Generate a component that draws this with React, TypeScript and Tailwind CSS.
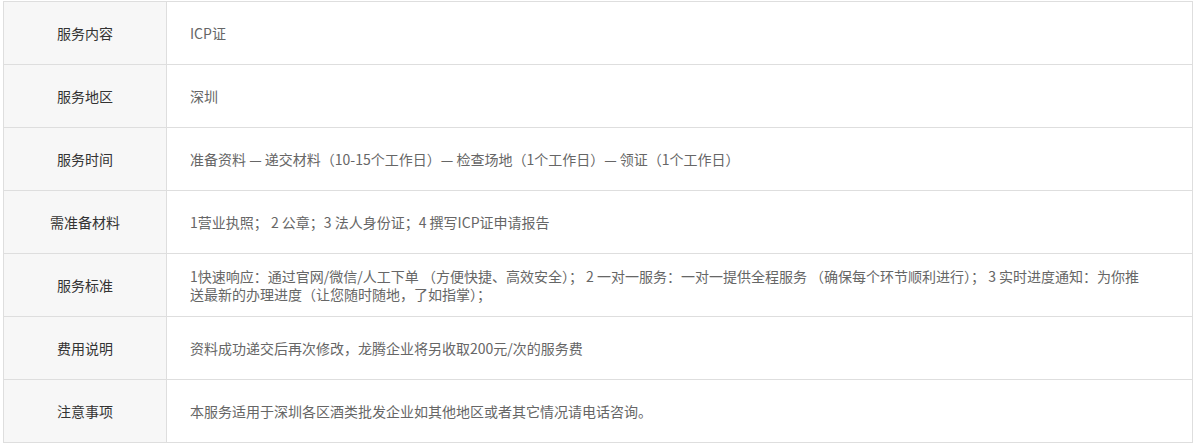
import React from "react";

const rows: { label: string; content: React.ReactNode }[] = [
  { label: "服务内容", content: "ICP证" },
  { label: "服务地区", content: "深圳" },
  {
    label: "服务时间",
    content: "准备资料 — 递交材料（10-15个工作日）— 检查场地（1个工作日）— 领证（1个工作日）",
  },
  { label: "需准备材料", content: "1营业执照； 2 公章；3 法人身份证；4 撰写ICP证申请报告" },
  {
    label: "服务标准",
    content: (
      <>
        1快速响应：通过官网/微信/人工下单 （方便快捷、高效安全）； 2 一对一服务：一对一提供全程服务 （确保每个环节顺利进行）； 3 实时进度通知：为你推
        <br />
        送最新的办理进度（让您随时随地，了如指掌）；
      </>
    ),
  },
  { label: "费用说明", content: "资料成功递交后再次修改，龙腾企业将另收取200元/次的服务费" },
  { label: "注意事项", content: "本服务适用于深圳各区酒类批发企业如其他地区或者其它情况请电话咨询。" },
];

export default function App() {
  return (
    <div
      className="w-[1194px] h-[446px] bg-white pt-[1px] pl-[3px]"
      style={{ fontFamily: '"Noto Sans CJK SC", "Noto Sans", sans-serif' }}
    >
      <div className="w-[1190px] border-t border-l border-r border-[#dedede]">
        {rows.map((r) => (
          <div key={r.label} className="flex h-[63px] border-b border-[#dedede]">
            <div className="w-[163px] shrink-0 bg-[#f7f7f7] border-r border-[#dedede] flex items-center justify-center text-[14px] text-[#333333]">
              {r.label}
            </div>
            <div className="flex-1 flex items-center pl-[23px] text-[14px] leading-[18px] text-[#666666]">
              <div className="whitespace-nowrap">{r.content}</div>
            </div>
          </div>
        ))}
      </div>
    </div>
  );
}
